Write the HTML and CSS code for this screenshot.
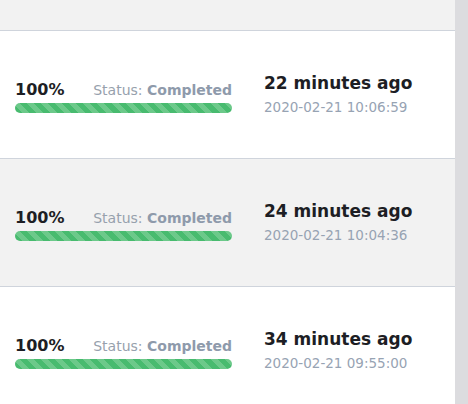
FILE: index.html
```html
<!DOCTYPE html>
<html>
<head>
<meta charset="utf-8">
<link rel="stylesheet" href="styles.css">
</head>
<body>
<div class="page">
  <div class="list">
    <div class="top"></div>
    <div class="row">
      <div class="progress">
        <div class="labels"><span class="pct">100%</span><span class="status">Status: <b>Completed</b></span></div>
        <div class="bar"></div>
      </div>
      <div class="time">
        <div class="ago">22 minutes ago</div>
        <div class="date">2020-02-21 10:06:59</div>
      </div>
    </div>
    <div class="row alt">
      <div class="progress">
        <div class="labels"><span class="pct">100%</span><span class="status">Status: <b>Completed</b></span></div>
        <div class="bar"></div>
      </div>
      <div class="time">
        <div class="ago">24 minutes ago</div>
        <div class="date">2020-02-21 10:04:36</div>
      </div>
    </div>
    <div class="row">
      <div class="progress">
        <div class="labels"><span class="pct">100%</span><span class="status">Status: <b>Completed</b></span></div>
        <div class="bar"></div>
      </div>
      <div class="time">
        <div class="ago">34 minutes ago</div>
        <div class="date">2020-02-21 09:55:00</div>
      </div>
    </div>
  </div>
  <div class="scrollbar"></div>
</div>
</body>
</html>
```
FILE: styles.css
```css
html, body { margin: 0; padding: 0; }
body { font-family: "DejaVu Sans", sans-serif; background: #fff; overflow: hidden; }
.page { display: flex; height: 404px; }
.list { flex: 1; overflow: hidden; }
.scrollbar { width: 13px; background: #dcdcdf; }
.top { height: 30px; background: #f2f2f2; border-bottom: 1px solid #cfd4dc; }
.row { height: 127px; border-bottom: 1px solid #cfd4dc; display: flex; align-items: center; padding-left: 15px; background: #fff; }
.row.alt { background: #f2f2f2; }
.progress { width: 217px; padding-top: 4px; }
.labels { display: flex; justify-content: space-between; align-items: baseline; line-height: 20px; }
.pct { font-size: 16px; font-weight: 700; color: #1d1e24; }
.status { font-size: 14px; color: #97a1ad; }
.status b { font-weight: 700; color: #8e9aab; }
.bar { margin-top: 3px; height: 10px; border-radius: 5px; background-color: #48bb6f;
  background-image: repeating-linear-gradient(45deg, #48bb6f 0 5px, #6cc98a 5px 10px); }
.time { margin-left: 32px; }
.ago { font-size: 17px; font-weight: 700; color: #1d1e24; line-height: 22px; }
.date { font-size: 13.5px; color: #97a3b3; line-height: 20px; margin-top: 3px; }
```
